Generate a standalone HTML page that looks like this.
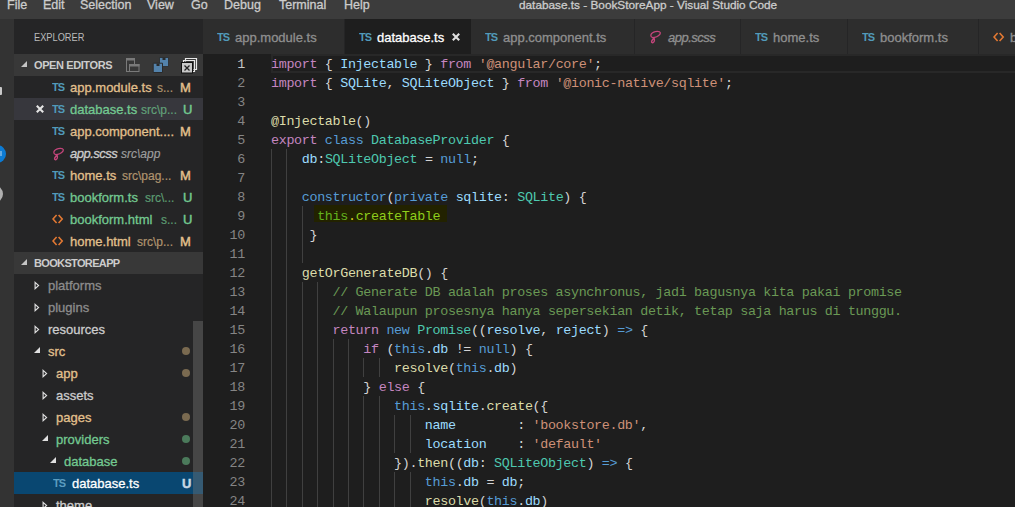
<!DOCTYPE html>
<html><head><meta charset="utf-8">
<style>
*{margin:0;padding:0;box-sizing:border-box}
html,body{width:1015px;height:507px;overflow:hidden;background:#1e1e1e;font-family:"Liberation Sans",sans-serif}
.mi,#title,.nm,.tab .tt{-webkit-text-stroke:0.3px}
.a{position:absolute;white-space:pre}
#menubar{position:absolute;left:0;top:0;width:1015px;height:19px;background:#3c3c3c}
.mi{position:absolute;top:-4px;font-size:12.5px;color:#cccccc;line-height:19px}
#title{position:absolute;left:519px;top:-4px;font-size:11.8px;color:#cccccc;line-height:19px}
#act{position:absolute;left:0;top:19px;width:14px;height:488px;background:#333333}
#side{position:absolute;left:14px;top:19px;width:189px;height:488px;background:#252526}
.sh{position:absolute;left:14px;width:189px;height:22px;background:#383838}
.sht{position:absolute;left:34px;font-size:11px;font-weight:bold;color:#cccccc;line-height:22px}
.row{position:absolute;left:14px;width:189px;height:22px}
.nm{position:absolute;font-size:13px;line-height:24px}
.ds{position:absolute;font-size:12px;line-height:24px;opacity:.72;-webkit-text-stroke:0.15px}
.st{position:absolute;font-size:13px;line-height:24px;-webkit-text-stroke:0.45px}
.ts{position:absolute;font-size:11px;font-weight:bold;color:#519aba;line-height:23px;letter-spacing:-0.9px;transform:scaleY(0.95)}
.mod{color:#e2c08d}
.unt{color:#73c991}
.ign{color:#8c8c8c}
.nrm{color:#cccccc}
.arr{position:absolute;width:0;height:0}
.dot{position:absolute;width:8px;height:8px;border-radius:50%}
#tabs{position:absolute;left:203px;top:19px;width:812px;height:35px;background:#252526}
.tab{position:absolute;top:0;height:35px;background:#2d2d2d}
.tab .tt{position:absolute;top:1px;font-size:13px;line-height:35px;color:#8f8f8f}
.tab .ts{line-height:35px;top:1px}
#editor{position:absolute;left:203px;top:54px;width:812px;height:453px;background:#1e1e1e}
.ln{position:absolute;left:203px;width:42px;text-align:right;font-family:"Liberation Mono",monospace;font-size:13.4px;letter-spacing:-0.344px;margin-top:1px;line-height:19px;height:19px;color:#858585}
.ln.cur{color:#c6c6c6}
.cl{position:absolute;left:271px;font-family:"Liberation Mono",monospace;font-size:13.4px;letter-spacing:-0.344px;line-height:19px;height:19px;color:#d4d4d4;white-space:pre;margin-top:1px}
.ig{position:absolute;width:1px;height:19px;background:#404040}
.k{color:#c586c0}.s{color:#569cd6}.t{color:#4ec9b0}.v{color:#9cdcfe}.f{color:#dcdcaa}.r{color:#ce9178}.c{color:#6a9955}
.g{color:#62b21e}.g2{color:#8fce1c}.g3{color:#d6d21e}
</style></head><body>
<div id="menubar">
<div class="mi" style="left:7px">File</div>
<div class="mi" style="left:43px">Edit</div>
<div class="mi" style="left:80px">Selection</div>
<div class="mi" style="left:147px">View</div>
<div class="mi" style="left:191px">Go</div>
<div class="mi" style="left:224px">Debug</div>
<div class="mi" style="left:279px">Terminal</div>
<div class="mi" style="left:344px">Help</div>
<div id="title">database.ts - BookStoreApp - Visual Studio Code</div>
</div>
<div id="act"></div>
<div class="a" style="left:0;top:87px;width:1.5px;height:8px;background:#c8c8c8;border-radius:0 1px 1px 0"></div>
<div class="a" style="left:-13px;top:144.5px;width:18.5px;height:18.5px;border-radius:50%;background:#0c7bd4"></div>
<div class="a" style="left:0;top:151px;width:1.5px;height:5px;background:#cfe3f5;opacity:.45"></div>
<div class="a" style="left:-15px;top:184.5px;width:18px;height:18px;border-radius:50%;border:3px solid #b0b0b0"></div>
<div id="side"></div>
<div class="a" style="left:34px;top:20px;line-height:35px;font-size:11px;color:#bbbbbb;transform:scaleX(0.84);transform-origin:0 0">EXPLORER</div>

<!-- OPEN EDITORS -->
<div class="sh" style="top:54px"></div>
<div class="sht" style="top:54px;letter-spacing:-0.4px">OPEN EDITORS</div>
<div class="row" style="top:98px;background:#37373d"></div>

<div class="ts" style="left:52px;top:76px">TS</div><div class="nm mod" style="left:70px;top:76px">app.module.ts</div><div class="ds mod" style="left:157px;top:76px">s...</div><div class="st mod" style="left:180px;top:76px">M</div>
<svg class="a" style="left:35px;top:104px" width="10" height="10"><path d="M1.8 1.8L8.2 8.2M8.2 1.8L1.8 8.2" stroke="#e4e4e4" stroke-width="2.1"/></svg>
<div class="ts" style="left:52px;top:98px">TS</div><div class="nm unt" style="left:70px;top:98px">database.ts</div><div class="ds unt" style="left:141px;top:98px">src\p...</div><div class="st unt" style="left:183px;top:98px">U</div>
<div class="ts" style="left:52px;top:120px">TS</div><div class="nm mod" style="left:70px;top:120px">app.component....</div><div class="st mod" style="left:180px;top:120px">M</div>
<svg class="a" style="left:51px;top:144px" width="14" height="18" viewBox="0 0 14 18"></svg>
<div class="nm nrm" style="left:70px;top:142px;font-style:italic;letter-spacing:-0.5px">app.scss</div><div class="ds nrm" style="left:121px;top:142px;font-style:italic">src\app</div>
<div class="ts" style="left:52px;top:164px">TS</div><div class="nm mod" style="left:70px;top:164px">home.ts</div><div class="ds mod" style="left:122px;top:164px">src\pag...</div><div class="st mod" style="left:180px;top:164px">M</div>
<div class="ts" style="left:52px;top:186px">TS</div><div class="nm unt" style="left:70px;top:186px">bookform.ts</div><div class="ds unt" style="left:145px;top:186px">src\...</div><div class="st unt" style="left:183px;top:186px">U</div>
<div class="nm unt" style="left:70px;top:208px">bookform.html</div><div class="ds unt" style="left:161px;top:208px">s...</div><div class="st unt" style="left:183px;top:208px">U</div>
<div class="nm mod" style="left:70px;top:230px">home.html</div><div class="ds mod" style="left:137px;top:230px">src\p...</div><div class="st mod" style="left:180px;top:230px">M</div>

<!-- BOOKSTOREAPP -->
<div class="sh" style="top:252px"></div>
<div class="sht" style="top:252px;letter-spacing:-0.65px">BOOKSTOREAPP</div>
<div class="nm ign" style="left:48px;top:274px">platforms</div>
<div class="nm ign" style="left:48px;top:296px">plugins</div>
<div class="nm nrm" style="left:48px;top:318px">resources</div>
<div class="nm mod" style="left:48px;top:340px">src</div>
<div class="nm mod" style="left:56px;top:362px">app</div>
<div class="nm nrm" style="left:56px;top:384px">assets</div>
<div class="nm mod" style="left:56px;top:406px">pages</div>
<div class="nm unt" style="left:56px;top:428px">providers</div>
<div class="nm unt" style="left:64px;top:450px">database</div>
<div class="row" style="top:472px;background:#094771"></div>
<div class="ts" style="left:53px;top:472px;color:#5c9dc0">TS</div><div class="nm" style="left:72px;top:472px;color:#ffffff">database.ts</div><div class="st" style="left:182px;top:472px;color:#c8d8e4;font-weight:bold">U</div>
<div class="nm nrm" style="left:56px;top:494px">theme</div>
<div class="a" style="left:193px;top:321px;width:10px;height:186px;background:rgba(121,121,121,0.4)"></div>

<!-- TABS -->
<div id="tabs">
<div class="tab" style="left:0;width:141px"><div class="ts" style="left:14px">TS</div><div class="tt" style="left:32px">app.module.ts</div></div>
<div class="tab" style="left:142px;width:126px;background:#1e1e1e"><div class="ts" style="left:14px">TS</div><div class="tt" style="left:32px;color:#ffffff">database.ts</div><svg class="a" style="left:106px;top:13px" width="10" height="10"><path d="M1.8 1.8L8.2 8.2M8.2 1.8L1.8 8.2" stroke="#e0e0e0" stroke-width="2.1"/></svg></div>
<div class="tab" style="left:268px;width:163px"><div class="ts" style="left:14px">TS</div><div class="tt" style="left:300px;left:32px">app.component.ts</div></div>
<div class="tab" style="left:432px;width:105px"><div class="tt" style="left:33px;font-style:italic;letter-spacing:-0.5px">app.scss</div></div>
<div class="tab" style="left:538px;width:106px"><div class="ts" style="left:14px">TS</div><div class="tt" style="left:32px">home.ts</div></div>
<div class="tab" style="left:645px;width:130px"><div class="ts" style="left:14px">TS</div><div class="tt" style="left:32px">bookform.ts</div></div>
<div class="tab" style="left:776px;width:40px"><div class="tt" style="left:31px">b</div></div>
</div>


<!-- header triangles -->
<svg class="a" style="left:21px;top:61px" width="7" height="7"><path d="M6 0V6H0Z" fill="#c5c5c5"/></svg>
<svg class="a" style="left:21px;top:259px" width="7" height="7"><path d="M6 0V6H0Z" fill="#c5c5c5"/></svg>
<!-- open editors toolbar -->
<svg class="a" style="left:125px;top:57px" width="17" height="17" viewBox="0 0 17 17">
<rect x="1.5" y="1.5" width="8" height="13" fill="none" stroke="#7a7a7a"/><rect x="1" y="1" width="9" height="2.5" fill="#7a7a7a"/>
<rect x="4.5" y="7.5" width="9.5" height="7" fill="#383838" stroke="#7a7a7a"/><rect x="4" y="7" width="10.5" height="2.5" fill="#7a7a7a"/>
</svg>
<svg class="a" style="left:152px;top:56px" width="18" height="18" viewBox="0 0 18 18">
<path d="M7.5 1.5H16.5V10.5H7.5Z" fill="#5382ab" stroke="#2a2a2a" stroke-width="0.8"/><rect x="10.5" y="1.5" width="3" height="2.5" fill="#2a2a2a"/>
<path d="M1.2 7.2H10.5V16.5H1.2Z" fill="#5382ab" stroke="#2a2a2a" stroke-width="1"/><rect x="4.5" y="7.5" width="3" height="2.5" fill="#2a2a2a"/>
</svg>
<svg class="a" style="left:180px;top:57px" width="18" height="17" viewBox="0 0 18 17">
<path d="M5.5 4.5V1.5H16.5V12.5H13.5" fill="none" stroke="#e8e8e8" stroke-width="1.2"/>
<path d="M3.5 6.5V3.5H14.5V14.5H11.5" fill="none" stroke="#e8e8e8" stroke-width="1.2"/>
<rect x="1.5" y="5.5" width="11" height="10.5" fill="#c8c8c8" stroke="#111" stroke-width="1"/>
<path d="M4.5 8.5L9.5 13.5M9.5 8.5L4.5 13.5" stroke="#222" stroke-width="1.3"/>
</svg>
<!-- sass & html icons sidebar -->
<svg class="a" style="left:47px;top:142.5px" width="22" height="22"><path d="M8.7 11.7C6 10.8 6.2 7.6 9.2 6.3C11.5 5.2 15.6 4.6 16.3 6.6C16.8 8.4 13.5 11 10.6 11.4ZM10.2 12.4C9 13.2 7.2 14.4 7.6 16.2C8.1 17.4 10 16.4 10.4 14.8C10.6 14 10.4 13 10.2 12.4" fill="none" stroke="#c4457b" stroke-width="1.3" stroke-linecap="round"/></svg>
<svg class="a" style="left:52px;top:214px" width="12" height="10"><path d="M4.6 1L1 5L4.6 9M6.6 1L10.2 5L6.6 9" fill="none" stroke="#e37933" stroke-width="1.6"/></svg>
<svg class="a" style="left:52px;top:236px" width="12" height="10"><path d="M4.6 1L1 5L4.6 9M6.6 1L10.2 5L6.6 9" fill="none" stroke="#e37933" stroke-width="1.6"/></svg>
<!-- tree arrows -->
<svg class="a" style="left:34px;top:281px" width="6" height="9"><path d="M1.1 1.3L4.6 4.5L1.1 7.7Z" fill="none" stroke="#e0e0e0" stroke-width="1.15"/></svg>
<svg class="a" style="left:34px;top:303px" width="6" height="9"><path d="M1.1 1.3L4.6 4.5L1.1 7.7Z" fill="none" stroke="#e0e0e0" stroke-width="1.15"/></svg>
<svg class="a" style="left:34px;top:325px" width="6" height="9"><path d="M1.1 1.3L4.6 4.5L1.1 7.7Z" fill="none" stroke="#e0e0e0" stroke-width="1.15"/></svg>
<svg class="a" style="left:34px;top:347px" width="7" height="7"><path d="M6 0V6H0Z" fill="#e0e0e0"/></svg>
<svg class="a" style="left:42px;top:369px" width="6" height="9"><path d="M1.1 1.3L4.6 4.5L1.1 7.7Z" fill="none" stroke="#e0e0e0" stroke-width="1.15"/></svg>
<svg class="a" style="left:42px;top:391px" width="6" height="9"><path d="M1.1 1.3L4.6 4.5L1.1 7.7Z" fill="none" stroke="#e0e0e0" stroke-width="1.15"/></svg>
<svg class="a" style="left:42px;top:413px" width="6" height="9"><path d="M1.1 1.3L4.6 4.5L1.1 7.7Z" fill="none" stroke="#e0e0e0" stroke-width="1.15"/></svg>
<svg class="a" style="left:42px;top:435px" width="7" height="7"><path d="M6 0V6H0Z" fill="#e0e0e0"/></svg>
<svg class="a" style="left:50px;top:457px" width="7" height="7"><path d="M6 0V6H0Z" fill="#e0e0e0"/></svg>
<svg class="a" style="left:42px;top:501px" width="6" height="9"><path d="M1.1 1.3L4.6 4.5L1.1 7.7Z" fill="none" stroke="#e0e0e0" stroke-width="1.15"/></svg>
<div class="dot" style="left:182px;top:347px;background:#7a6a50"></div>
<div class="dot" style="left:182px;top:369px;background:#7a6a50"></div>
<div class="dot" style="left:182px;top:413px;background:#7a6a50"></div>
<div class="dot" style="left:182px;top:435px;background:#4b7a5b"></div>
<div class="dot" style="left:182px;top:457px;background:#4b7a5b"></div>
<svg class="a" style="left:644px;top:26px" width="22" height="22"><path d="M8.7 11.7C6 10.8 6.2 7.6 9.2 6.3C11.5 5.2 15.6 4.6 16.3 6.6C16.8 8.4 13.5 11 10.6 11.4ZM10.2 12.4C9 13.2 7.2 14.4 7.6 16.2C8.1 17.4 10 16.4 10.4 14.8C10.6 14 10.4 13 10.2 12.4" fill="none" stroke="#c4457b" stroke-width="1.3" stroke-linecap="round"/></svg>
<svg class="a" style="left:993px;top:32px" width="12" height="10"><path d="M4.6 1L1 5L4.6 9M6.6 1L10.2 5L6.6 9" fill="none" stroke="#e37933" stroke-width="1.6"/></svg>
<div id="editor"></div>
<div class="a" style="left:271px;top:54px;width:760px;height:19px;border:2px solid #282828"></div>
<div class="a" style="left:314px;top:205px;width:133px;height:17px;background:#222200"></div>
<div class="ln cur" style="top:54px">1</div>
<div class="cl" style="top:54px"><span class="k">import</span> { <span class="v">Injectable</span> } <span class="k">from</span> <span class="r">&#x27;@angular/core&#x27;</span>;</div>
<div class="ln" style="top:73px">2</div>
<div class="cl" style="top:73px"><span class="k">import</span> { <span class="v">SQLite</span>, <span class="v">SQLiteObject</span> } <span class="k">from</span> <span class="r">&#x27;@ionic-native/sqlite&#x27;</span>;</div>
<div class="ln" style="top:92px">3</div>
<div class="cl" style="top:92px"></div>
<div class="ln" style="top:111px">4</div>
<div class="cl" style="top:111px"><span class="f">@Injectable</span>()</div>
<div class="ln" style="top:130px">5</div>
<div class="cl" style="top:130px"><span class="k">export</span> <span class="s">class</span> <span class="t">DatabaseProvider</span> {</div>
<div class="ln" style="top:149px">6</div>
<div class="cl" style="top:149px">    <span class="v">db</span>:<span class="t">SQLiteObject</span> = <span class="s">null</span>;</div>
<div class="ig" style="left:271.0px;top:149px"></div>
<div class="ig" style="left:286.4px;top:149px"></div>
<div class="ln" style="top:168px">7</div>
<div class="cl" style="top:168px"></div>
<div class="ig" style="left:271.0px;top:168px"></div>
<div class="ig" style="left:286.4px;top:168px"></div>
<div class="ln" style="top:187px">8</div>
<div class="cl" style="top:187px">    <span class="s">constructor</span>(<span class="s">private</span> <span class="v">sqlite</span>: <span class="t">SQLite</span>) {</div>
<div class="ig" style="left:271.0px;top:187px"></div>
<div class="ig" style="left:286.4px;top:187px"></div>
<div class="ln" style="top:206px">9</div>
<div class="cl" style="top:206px">      <span class="g">this</span><span class="g3">.</span><span class="g2">createTable</span></div>
<div class="ig" style="left:271.0px;top:206px"></div>
<div class="ig" style="left:286.4px;top:206px"></div>
<div class="ig" style="left:301.8px;top:206px"></div>
<div class="ln" style="top:225px">10</div>
<div class="cl" style="top:225px">     }</div>
<div class="ig" style="left:271.0px;top:225px"></div>
<div class="ig" style="left:286.4px;top:225px"></div>
<div class="ig" style="left:301.8px;top:225px"></div>
<div class="ln" style="top:244px">11</div>
<div class="cl" style="top:244px"></div>
<div class="ig" style="left:271.0px;top:244px"></div>
<div class="ig" style="left:286.4px;top:244px"></div>
<div class="ig" style="left:301.8px;top:244px"></div>
<div class="ln" style="top:263px">12</div>
<div class="cl" style="top:263px">    <span class="f">getOrGenerateDB</span>() {</div>
<div class="ig" style="left:271.0px;top:263px"></div>
<div class="ig" style="left:286.4px;top:263px"></div>
<div class="ln" style="top:282px">13</div>
<div class="cl" style="top:282px">        <span class="c">// Generate DB adalah proses asynchronus, jadi bagusnya kita pakai promise</span></div>
<div class="ig" style="left:271.0px;top:282px"></div>
<div class="ig" style="left:286.4px;top:282px"></div>
<div class="ig" style="left:301.8px;top:282px"></div>
<div class="ig" style="left:317.2px;top:282px"></div>
<div class="ln" style="top:301px">14</div>
<div class="cl" style="top:301px">        <span class="c">// Walaupun prosesnya hanya sepersekian detik, tetap saja harus di tunggu.</span></div>
<div class="ig" style="left:271.0px;top:301px"></div>
<div class="ig" style="left:286.4px;top:301px"></div>
<div class="ig" style="left:301.8px;top:301px"></div>
<div class="ig" style="left:317.2px;top:301px"></div>
<div class="ln" style="top:320px">15</div>
<div class="cl" style="top:320px">        <span class="k">return</span> <span class="s">new</span> <span class="t">Promise</span>((<span class="v">resolve</span>, <span class="v">reject</span>) <span class="s">=&gt;</span> {</div>
<div class="ig" style="left:271.0px;top:320px"></div>
<div class="ig" style="left:286.4px;top:320px"></div>
<div class="ig" style="left:301.8px;top:320px"></div>
<div class="ig" style="left:317.2px;top:320px"></div>
<div class="ln" style="top:339px">16</div>
<div class="cl" style="top:339px">            <span class="k">if</span> (<span class="s">this</span>.<span class="v">db</span> != <span class="s">null</span>) {</div>
<div class="ig" style="left:271.0px;top:339px"></div>
<div class="ig" style="left:286.4px;top:339px"></div>
<div class="ig" style="left:301.8px;top:339px"></div>
<div class="ig" style="left:317.2px;top:339px"></div>
<div class="ig" style="left:332.6px;top:339px"></div>
<div class="ig" style="left:348.0px;top:339px"></div>
<div class="ln" style="top:358px">17</div>
<div class="cl" style="top:358px">                <span class="f">resolve</span>(<span class="s">this</span>.<span class="v">db</span>)</div>
<div class="ig" style="left:271.0px;top:358px"></div>
<div class="ig" style="left:286.4px;top:358px"></div>
<div class="ig" style="left:301.8px;top:358px"></div>
<div class="ig" style="left:317.2px;top:358px"></div>
<div class="ig" style="left:332.6px;top:358px"></div>
<div class="ig" style="left:348.0px;top:358px"></div>
<div class="ig" style="left:363.4px;top:358px"></div>
<div class="ig" style="left:378.8px;top:358px"></div>
<div class="ln" style="top:377px">18</div>
<div class="cl" style="top:377px">            } <span class="k">else</span> {</div>
<div class="ig" style="left:271.0px;top:377px"></div>
<div class="ig" style="left:286.4px;top:377px"></div>
<div class="ig" style="left:301.8px;top:377px"></div>
<div class="ig" style="left:317.2px;top:377px"></div>
<div class="ig" style="left:332.6px;top:377px"></div>
<div class="ig" style="left:348.0px;top:377px"></div>
<div class="ln" style="top:396px">19</div>
<div class="cl" style="top:396px">                <span class="s">this</span>.<span class="v">sqlite</span>.<span class="f">create</span>({</div>
<div class="ig" style="left:271.0px;top:396px"></div>
<div class="ig" style="left:286.4px;top:396px"></div>
<div class="ig" style="left:301.8px;top:396px"></div>
<div class="ig" style="left:317.2px;top:396px"></div>
<div class="ig" style="left:332.6px;top:396px"></div>
<div class="ig" style="left:348.0px;top:396px"></div>
<div class="ig" style="left:363.4px;top:396px"></div>
<div class="ig" style="left:378.8px;top:396px"></div>
<div class="ln" style="top:415px">20</div>
<div class="cl" style="top:415px">                    <span class="v">name</span>        : <span class="r">&#x27;bookstore.db&#x27;</span>,</div>
<div class="ig" style="left:271.0px;top:415px"></div>
<div class="ig" style="left:286.4px;top:415px"></div>
<div class="ig" style="left:301.8px;top:415px"></div>
<div class="ig" style="left:317.2px;top:415px"></div>
<div class="ig" style="left:332.6px;top:415px"></div>
<div class="ig" style="left:348.0px;top:415px"></div>
<div class="ig" style="left:363.4px;top:415px"></div>
<div class="ig" style="left:378.8px;top:415px"></div>
<div class="ig" style="left:394.2px;top:415px"></div>
<div class="ig" style="left:409.5px;top:415px"></div>
<div class="ln" style="top:434px">21</div>
<div class="cl" style="top:434px">                    <span class="v">location</span>    : <span class="r">&#x27;default&#x27;</span></div>
<div class="ig" style="left:271.0px;top:434px"></div>
<div class="ig" style="left:286.4px;top:434px"></div>
<div class="ig" style="left:301.8px;top:434px"></div>
<div class="ig" style="left:317.2px;top:434px"></div>
<div class="ig" style="left:332.6px;top:434px"></div>
<div class="ig" style="left:348.0px;top:434px"></div>
<div class="ig" style="left:363.4px;top:434px"></div>
<div class="ig" style="left:378.8px;top:434px"></div>
<div class="ig" style="left:394.2px;top:434px"></div>
<div class="ig" style="left:409.5px;top:434px"></div>
<div class="ln" style="top:453px">22</div>
<div class="cl" style="top:453px">                }).<span class="f">then</span>((<span class="v">db</span>: <span class="t">SQLiteObject</span>) <span class="s">=&gt;</span> {</div>
<div class="ig" style="left:271.0px;top:453px"></div>
<div class="ig" style="left:286.4px;top:453px"></div>
<div class="ig" style="left:301.8px;top:453px"></div>
<div class="ig" style="left:317.2px;top:453px"></div>
<div class="ig" style="left:332.6px;top:453px"></div>
<div class="ig" style="left:348.0px;top:453px"></div>
<div class="ig" style="left:363.4px;top:453px"></div>
<div class="ig" style="left:378.8px;top:453px"></div>
<div class="ln" style="top:472px">23</div>
<div class="cl" style="top:472px">                    <span class="s">this</span>.<span class="v">db</span> = <span class="v">db</span>;</div>
<div class="ig" style="left:271.0px;top:472px"></div>
<div class="ig" style="left:286.4px;top:472px"></div>
<div class="ig" style="left:301.8px;top:472px"></div>
<div class="ig" style="left:317.2px;top:472px"></div>
<div class="ig" style="left:332.6px;top:472px"></div>
<div class="ig" style="left:348.0px;top:472px"></div>
<div class="ig" style="left:363.4px;top:472px"></div>
<div class="ig" style="left:378.8px;top:472px"></div>
<div class="ig" style="left:394.2px;top:472px"></div>
<div class="ig" style="left:409.5px;top:472px"></div>
<div class="ln" style="top:491px">24</div>
<div class="cl" style="top:491px">                    <span class="f">resolve</span>(<span class="s">this</span>.<span class="v">db</span>)</div>
<div class="ig" style="left:271.0px;top:491px"></div>
<div class="ig" style="left:286.4px;top:491px"></div>
<div class="ig" style="left:301.8px;top:491px"></div>
<div class="ig" style="left:317.2px;top:491px"></div>
<div class="ig" style="left:332.6px;top:491px"></div>
<div class="ig" style="left:348.0px;top:491px"></div>
<div class="ig" style="left:363.4px;top:491px"></div>
<div class="ig" style="left:378.8px;top:491px"></div>
<div class="ig" style="left:394.2px;top:491px"></div>
<div class="ig" style="left:409.5px;top:491px"></div>
</body></html>
